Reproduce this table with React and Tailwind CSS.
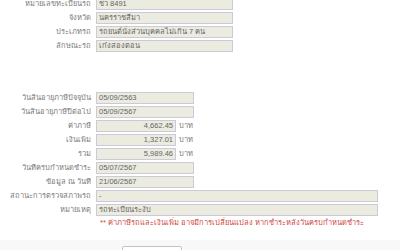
const topRows = [
  { label: 'หมายเลขทะเบียนรถ', value: 'ชว 8491' },
  { label: 'จังหวัด', value: 'นครราชสีมา' },
  { label: 'ประเภทรถ', value: 'รถยนต์นั่งส่วนบุคคลไม่เกิน 7 คน' },
  { label: 'ลักษณะรถ', value: 'เก๋งสองตอน' },
];

const taxRows = [
  { label: 'วันสิ้นอายุภาษีปัจจุบัน', value: '05/09/2563', w: 'w-[98px]' },
  { label: 'วันสิ้นอายุภาษีปีต่อไป', value: '05/09/2567', w: 'w-[98px]' },
  { label: 'ค่าภาษี', value: '4,662.45', w: 'w-[80px]', money: true },
  { label: 'เงินเพิ่ม', value: '1,327.01', w: 'w-[80px]', money: true },
  { label: 'รวม', value: '5,989.46', w: 'w-[80px]', money: true },
  { label: 'วันที่ครบกำหนดชำระ', value: '05/07/2567', w: 'w-[98px]' },
  { label: 'ข้อมูล ณ วันที่', value: '21/06/2567', w: 'w-[98px]' },
  { label: 'สถานะการตรวจสภาพรถ', value: '-', w: 'w-[282px]' },
  { label: 'หมายเหตุ', value: 'รถทะเบียนระงับ', w: 'w-[282px]' },
];

function Row({ label, value, w, money }) {
  return (
    <div className="flex items-center h-[14px]">
      <div className="w-[96px] pr-[5px] text-right text-[#7a7a7a] truncate">{label}</div>
      <div
        className={`${w} h-[12px] px-[2px] flex items-center bg-[#ecebdf] border border-[#cbcad8] text-[#666] ${money ? 'justify-end' : ''}`}
      >
        {value}
      </div>
      {money && <span className="ml-[3px] text-[#7a7a7a]">บาท</span>}
    </div>
  );
}

export default function App() {
  return (
    <div
      className="w-[400px] h-[250px] overflow-hidden bg-white text-[7.5px] leading-none flex flex-col"
      style={{ fontFamily: '"Liberation Sans", "Noto Sans", sans-serif' }}
    >
      <div className="-mt-[3px] flex flex-col">
        {topRows.map((r) => (
          <Row key={r.label} {...r} w="w-[137px]" />
        ))}
      </div>
      <div className="mt-[38px] flex flex-col">
        {taxRows.map((r) => (
          <Row key={r.label} {...r} />
        ))}
      </div>
      <div className="pl-[100px] mt-[2px] text-[#d04545]">
        ** ค่าภาษีรถและเงินเพิ่ม อาจมีการเปลี่ยนแปลง หากชำระหลังวันครบกำหนดชำระ
      </div>
      <div className="mt-[13px] flex-1 shrink-0 min-h-[14px] bg-[#f8f8f8] pt-[6px] pl-[122px]">
        <div className="w-[60px] h-[10px] bg-white border border-[#c4c4c4] rounded-[2px]" />
      </div>
    </div>
  );
}
